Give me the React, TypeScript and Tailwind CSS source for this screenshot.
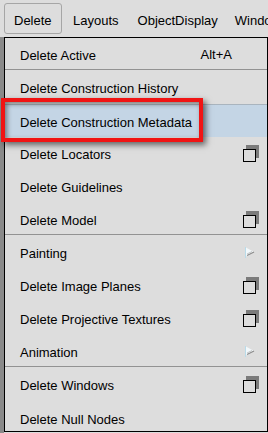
import React from "react";

type Item = {
  label: string;
  shortcut?: string;
  icon?: "box" | "flag";
  sep?: boolean;
  hl?: boolean;
  last?: boolean;
};

const items: Item[] = [
  { label: "Delete Active", shortcut: "Alt+A", sep: true },
  { label: "Delete Construction History" },
  { label: "Delete Construction Metadata", hl: true },
  { label: "Delete Locators", icon: "box" },
  { label: "Delete Guidelines" },
  { label: "Delete Model", icon: "box", sep: true },
  { label: "Painting", icon: "flag" },
  { label: "Delete Image Planes", icon: "box" },
  { label: "Delete Projective Textures", icon: "box" },
  { label: "Animation", icon: "flag", sep: true },
  { label: "Delete Windows", icon: "box" },
  { label: "Delete Null Nodes", last: true },
];

function OptionBox() {
  return (
    <svg width="16" height="17" viewBox="0 0 16 17" className="block">
      <rect x="3" y="0" width="13" height="13" fill="#7b7b7b" />
      <rect x="0.5" y="4.5" width="12" height="12" fill="#dddddd" stroke="#000" strokeWidth="1" />
    </svg>
  );
}

function Flag() {
  return (
    <svg width="16" height="11" viewBox="0 0 16 11" className="block">
      <polygon points="2,0 11,5 2,10" fill="#f2f8fb" />
      <line x1="2.5" y1="0" x2="2.5" y2="11" stroke="#b9dbe9" strokeWidth="1" />
      <line x1="4" y1="8.5" x2="11" y2="5" stroke="#8a8a8a" strokeWidth="1.2" />
      <line x1="4" y1="7" x2="9" y2="4.5" stroke="#b5b5b5" strokeWidth="0.8" />
    </svg>
  );
}

function Row({ it }: { it: Item }) {
  const right = (
    <>
      {it.shortcut && <span className="text-[13px] leading-none">{it.shortcut}</span>}
      <span className="w-[16px] ml-[11px] mr-[8px] flex items-center justify-center">
        {it.icon === "box" && <OptionBox />}
        {it.icon === "flag" && <Flag />}
      </span>
    </>
  );
  const label = <span className="flex-1 text-[13px] leading-none pt-[2px]">{it.label}</span>;
  if (it.sep) {
    return (
      <div className="h-[33px] flex flex-col">
        <div className="h-[31px] pt-[2px] flex items-center pl-[15px]">
          {label}
          {right}
        </div>
        <div className="h-[1px] bg-[#929292]" />
        <div className="h-[1px]" />
      </div>
    );
  }
  if (it.hl) {
    return (
      <div className="h-[33px] flex items-center pl-[15px] bg-[#c4d5e5] border-t border-[#a9b4be]">
        {label}
        {right}
      </div>
    );
  }
  return (
    <div
      className={
        it.last
          ? "h-[30px] pt-[4px] flex items-center pl-[15px]"
          : "h-[33px] flex items-center pl-[15px]"
      }
    >
      {label}
      {right}
    </div>
  );
}

export default function App() {
  return (
    <div
      className="w-[268px] h-[433px] bg-[#dddddd] overflow-hidden flex flex-col text-black"
      style={{ fontFamily: '"Liberation Sans", Arial, sans-serif' }}
    >
      <div className="h-[37px] shrink-0 flex items-start pl-[4px] pt-[3px] whitespace-nowrap text-[13px] overflow-hidden">
        <div className="shrink-0 h-[31px] w-[58px] border border-[#a6a6a6] rounded-[3px] flex items-center pl-[9px] pt-[4px]">
          Delete
        </div>
        <div className="shrink-0 h-[31px] flex items-center ml-[11px] pt-[4px]">Layouts</div>
        <div className="shrink-0 h-[31px] flex items-center ml-[19px] pt-[4px]">ObjectDisplay</div>
        <div className="shrink-0 h-[31px] flex items-center ml-[17px] pt-[4px]">Windows</div>
      </div>
      <div className="flex-1 flex">
        <div className="w-[4px] shrink-0 bg-[#8a8a8a]" />
        <div className="relative shrink-0 w-[264px] h-[395px] border border-black bg-[#dddddd]">
          {items.map((it) => (
            <Row key={it.label} it={it} />
          ))}
          <div className="absolute left-[-4px] top-[60px] w-[202px] h-[44px] border-[4px] border-[#f01414] shadow-[3px_3px_6px_rgba(0,0,0,0.55),inset_2px_2px_5px_rgba(0,0,0,0.45)]" />
        </div>
      </div>
    </div>
  );
}
